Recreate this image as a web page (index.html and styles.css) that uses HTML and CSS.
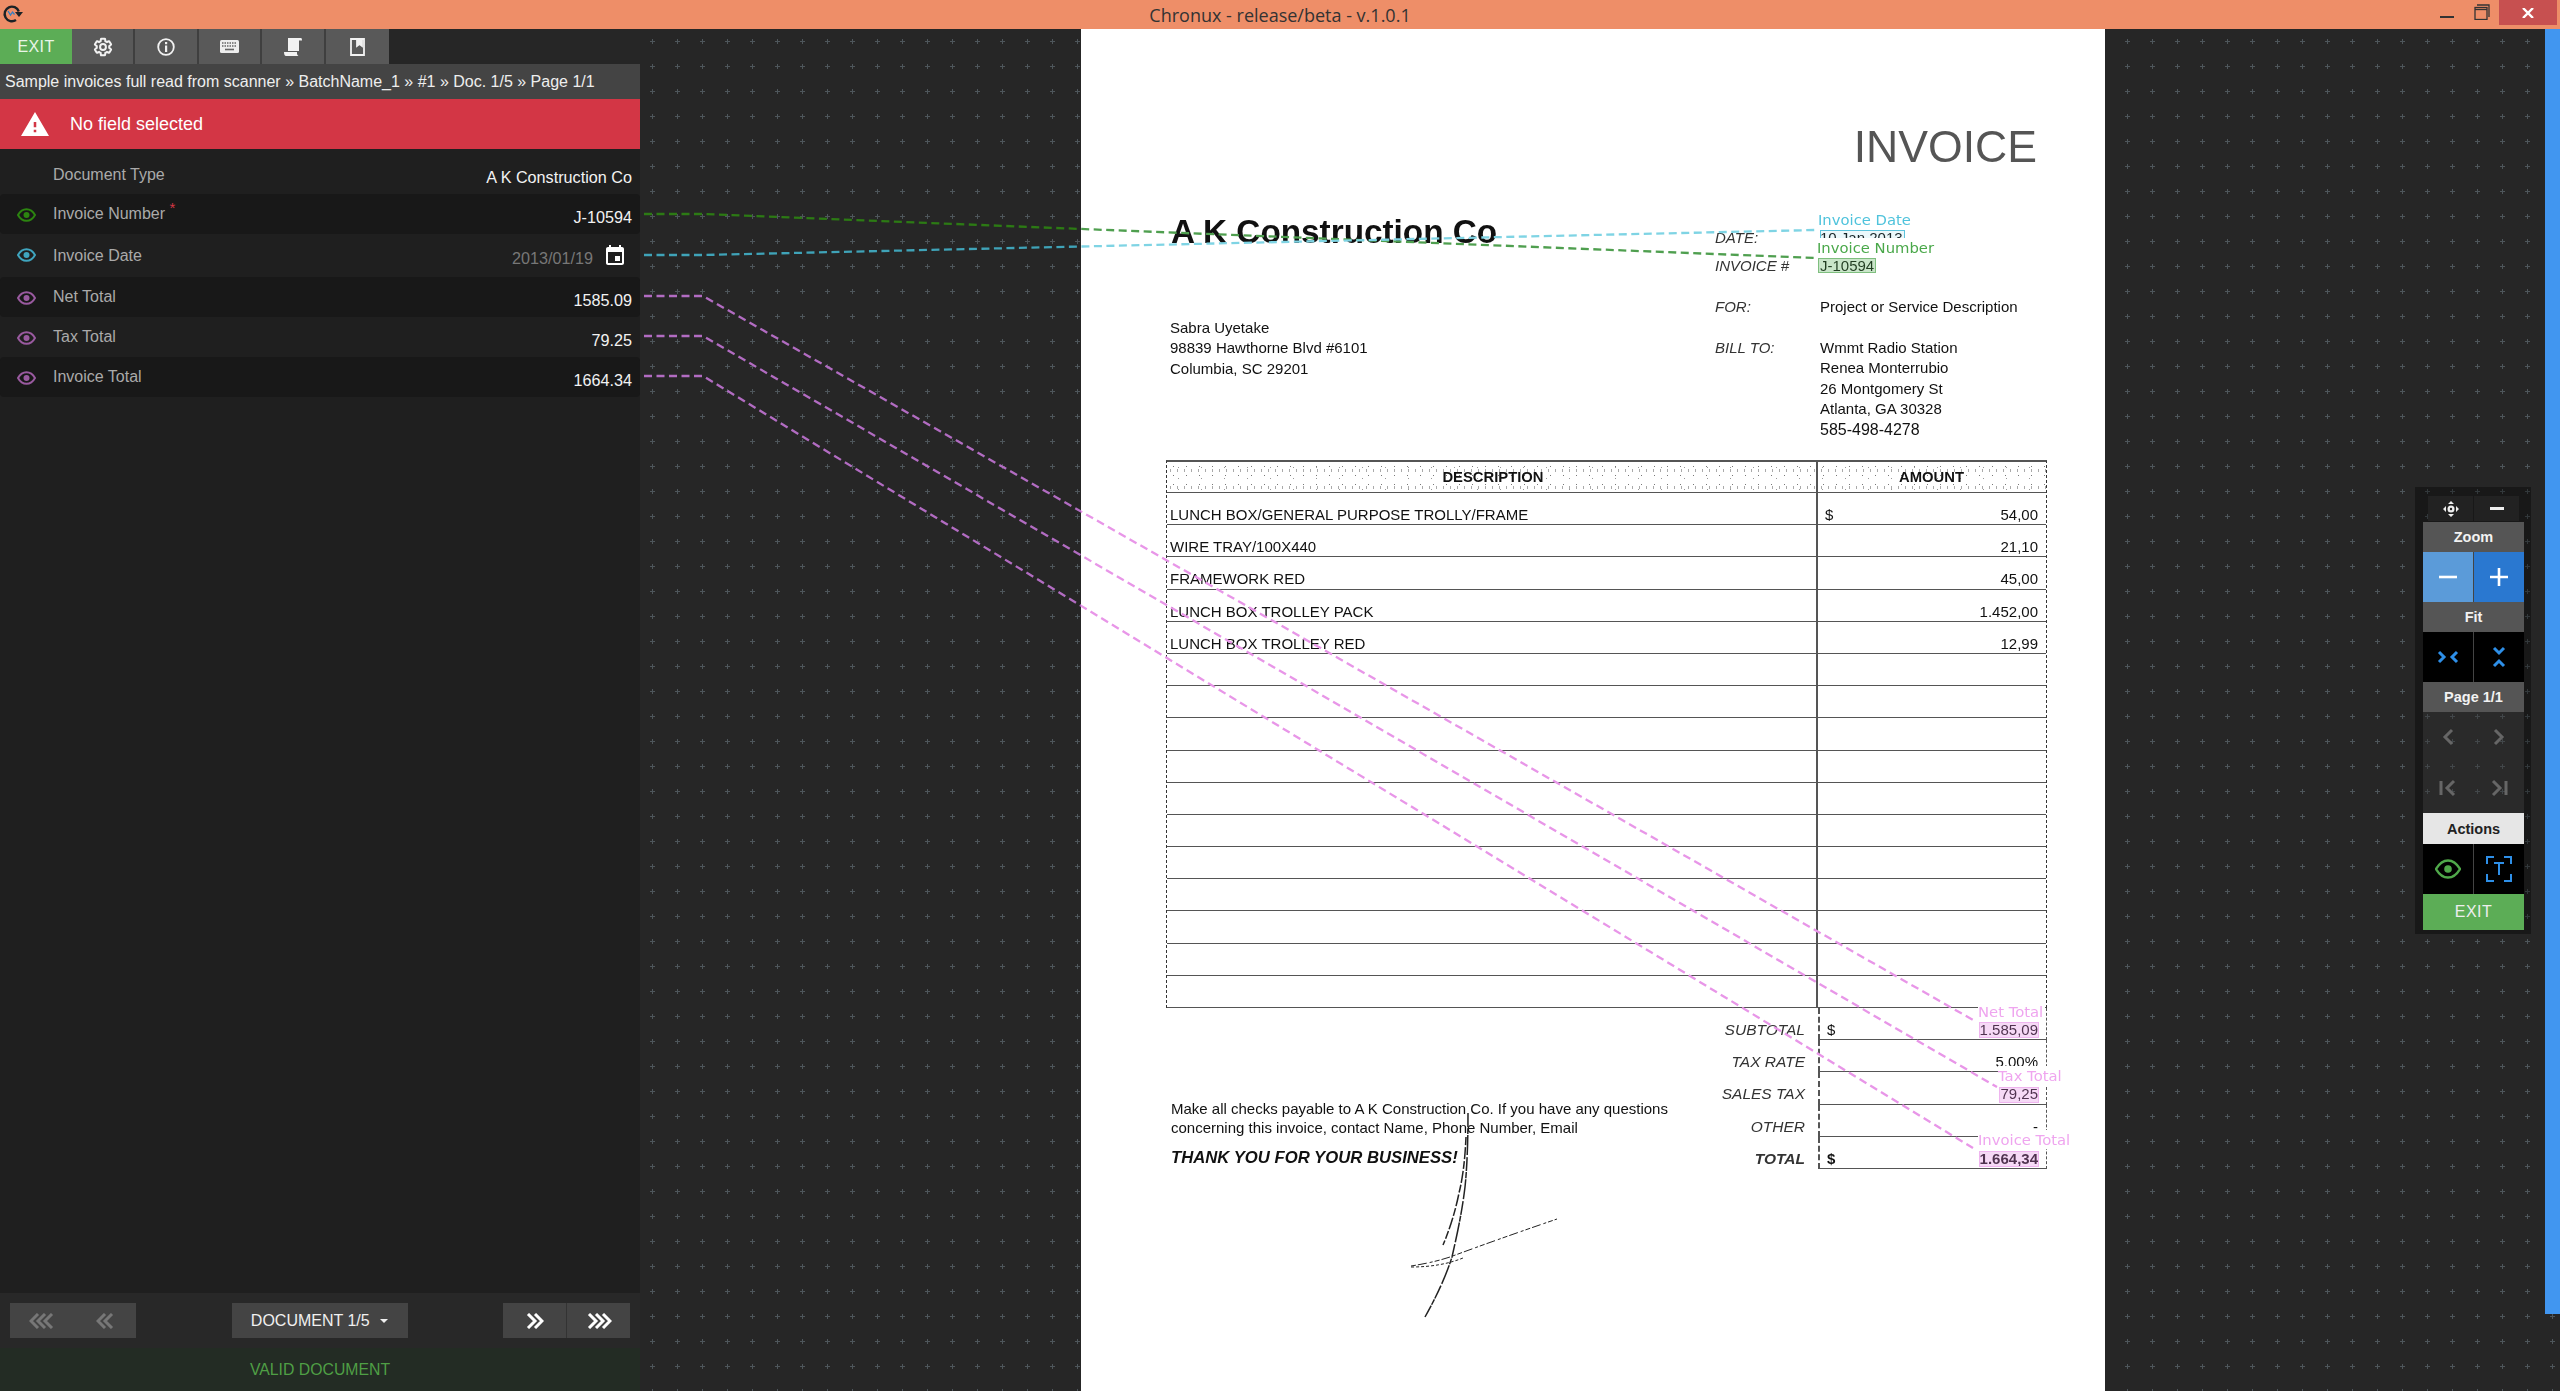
FILE: index.html
```html
<!DOCTYPE html>
<html lang="en">

<head>
    <meta charset="UTF-8">
    <title>Chronux - release/beta - v.1.0.1</title>
    <link rel="stylesheet" href="styles.css">
</head>

<body>
    <header class="titlebar">
        <svg class="app-logo" width="22" height="22" viewBox="0 0 22 22">
            <path d="M14 17A7.300 7.300 0 1 1 16.800 8.500" fill="none" stroke="#1c2226" stroke-width="2.400"/>
            <path d="M13 9h8l-4 5z" fill="#1c2226"/>
            <path d="M6 8l2.500 4 2-3 2 2.500" fill="none" stroke="#2f7fc4" stroke-width="1.300"/>
        </svg>
        <span class="app-title">Chronux - release/beta - v.1.0.1</span>
        <div class="win-controls">
            <span class="win-min"></span>
            <svg class="win-restore" width="16" height="16" viewBox="0 0 16 16" fill="none" stroke="#333" stroke-width="1.300">
                <path d="M3 1h12v12"/>
                <rect x="1" y="3.500" width="12" height="12"/>
                <path d="M1 5.500h12"/>
            </svg>
            <span class="win-close">
                <svg width="12" height="10" viewBox="0 0 12 10"><path d="M1 0l10 10M11 0L1 10" stroke="#fff" stroke-width="2.400"/></svg>
            </span>
        </div>
    </header>

    <main class="workspace">
        <aside class="sidebar">
            <nav class="toolbar">
                <button class="tool-exit">EXIT</button>
                <button class="tool-btn">
                    <svg width="20" height="20" viewBox="0 0 24 24" fill="none" stroke="#f2f2f2" stroke-width="2.400"><path d="M19.430 12.980c.04-.32.07-.64.07-.98s-.03-.66-.07-.98l2.110-1.650c.19-.15.24-.42.12-.64l-2-3.460c-.12-.22-.39-.3-.61-.22l-2.490 1c-.52-.4-1.080-.73-1.690-.98l-.38-2.650C14.460 2.180 14.250 2 14 2h-4c-.25 0-.46.18-.49.42l-.38 2.650c-.61.25-1.170.59-1.690.98l-2.490-1c-.23-.09-.49 0-.61.22l-2 3.460c-.13.22-.07.49.12.64l2.110 1.650c-.04.32-.07.65-.07.98s.03.66.07.98l-2.110 1.650c-.19.15-.24.42-.12.64l2 3.460c.12.22.39.3.61.22l2.490-1c.52.4 1.080.73 1.690.98l.38 2.650c.03.24.24.42.49.42h4c.25 0 .46-.18.49-.42l.38-2.650c.61-.25 1.170-.59 1.690-.98l2.490 1c.23.09.49 0 .61-.22l2-3.460c.12-.22.07-.49-.12-.64l-2.110-1.650z"/><circle cx="12" cy="12" r="3.500"/></svg>
                </button>
                <button class="tool-btn">
                    <svg width="18" height="18" viewBox="0 0 18 18"><circle cx="9" cy="9" r="7.800" fill="none" stroke="#f2f2f2" stroke-width="1.800"/><rect x="8" y="7.500" width="2.200" height="6.500" fill="#f2f2f2"/><rect x="8" y="4" width="2.200" height="2.200" fill="#f2f2f2"/></svg>
                </button>
                <button class="tool-btn">
                    <svg width="19" height="13" viewBox="0 0 19 13"><rect width="19" height="13" rx="1.500" fill="#eee"/><path d="M2 3h15M2 6h15" stroke="#666" stroke-width="1.500" stroke-dasharray="1.500 1"/><path d="M5 9.500h9" stroke="#666" stroke-width="1.600"/></svg>
                </button>
                <button class="tool-btn">
                    <svg width="18" height="18" viewBox="0 0 18 18" fill="#f2f2f2"><path d="M4 0h13c.6 0 1 .8 1 2.500h-3V13H4z"/><path d="M0 14h13v1.500c0 1 .6 1.800 1.500 2.500H2c-1.200 0-2-1.500-2-4z"/></svg>
                </button>
                <button class="tool-btn">
                    <svg width="15" height="18" viewBox="0 0 15 18"><path d="M1 1h13v16H1zM7 1v7l2.500-2L12 8V1" fill="none" stroke="#f2f2f2" stroke-width="1.800"/><path d="M7 1h5v7L9.500 6 7 8z" fill="#f2f2f2"/></svg>
                </button>
            </nav>

            <div class="breadcrumb">Sample invoices full read from scanner » BatchName_1 » #1 » Doc. 1/5 » Page 1/1</div>

            <div class="alert">
                <svg width="28" height="24" viewBox="1 2 22 19" preserveAspectRatio="none"><path fill="#fff" d="M1 21h22L12 2 1 21zm12-3h-2v-2h2v2zm0-4h-2v-4h2v4z"/></svg>
                <span>No field selected</span>
            </div>

            <ul class="fields">
                <li class="field">
                    <span class="field-name">Document Type</span>
                    <span class="field-value">A K Construction Co</span>
                </li>
                <li class="field field-dark">
                    <svg class="eye eye-green" width="19" height="14" viewBox="0 0 19 14"><path d="M1 7c2-3.600 5-5.800 8.500-5.800S16 3.400 18 7c-2 3.600-5 5.800-8.500 5.800S3 10.600 1 7z"/><circle cx="9.500" cy="7" r="3"/></svg>
                    <span class="field-name">Invoice Number <sup class="required">*</sup></span>
                    <span class="field-value">J-10594</span>
                </li>
                <li class="field field-date">
                    <svg class="eye eye-blue" width="19" height="14" viewBox="0 0 19 14"><path d="M1 7c2-3.600 5-5.800 8.500-5.800S16 3.400 18 7c-2 3.600-5 5.800-8.500 5.800S3 10.600 1 7z"/><circle cx="9.500" cy="7" r="3"/></svg>
                    <span class="field-name">Invoice Date</span>
                    <span class="field-value date-value">2013/01/19</span>
                    <svg class="calendar" width="24" height="24" viewBox="0 0 24 24"><path fill="#fff" d="M17 12h-5v5h5v-5zM16 1v2H8V1H6v2H5c-1.110 0-1.990.9-1.990 2L3 19c0 1.100.89 2 2 2h14c1.100 0 2-.9 2-2V5c0-1.100-.9-2-2-2h-1V1h-2zm3 18H5V8h14v11z"/></svg>
                </li>
                <li class="field field-dark">
                    <svg class="eye eye-purple" width="19" height="14" viewBox="0 0 19 14"><path d="M1 7c2-3.600 5-5.800 8.500-5.800S16 3.400 18 7c-2 3.600-5 5.800-8.500 5.800S3 10.600 1 7z"/><circle cx="9.500" cy="7" r="3"/></svg>
                    <span class="field-name">Net Total</span>
                    <span class="field-value">1585.09</span>
                </li>
                <li class="field">
                    <svg class="eye eye-purple" width="19" height="14" viewBox="0 0 19 14"><path d="M1 7c2-3.600 5-5.800 8.500-5.800S16 3.400 18 7c-2 3.600-5 5.800-8.500 5.800S3 10.600 1 7z"/><circle cx="9.500" cy="7" r="3"/></svg>
                    <span class="field-name">Tax Total</span>
                    <span class="field-value">79.25</span>
                </li>
                <li class="field field-dark">
                    <svg class="eye eye-purple" width="19" height="14" viewBox="0 0 19 14"><path d="M1 7c2-3.600 5-5.800 8.500-5.800S16 3.400 18 7c-2 3.600-5 5.800-8.500 5.800S3 10.600 1 7z"/><circle cx="9.500" cy="7" r="3"/></svg>
                    <span class="field-name">Invoice Total</span>
                    <span class="field-value">1664.34</span>
                </li>
            </ul>

            <div class="doc-nav">
                <div class="nav-group nav-disabled">
                    <button class="nav-btn"><svg width="26" height="16" viewBox="0 0 26 16"><path d="M9 1L2 8l7 7M16 1L9 8l7 7M23 1l-7 7 7 7"/></svg></button>
                    <button class="nav-btn"><svg width="18" height="16" viewBox="0 0 18 16"><path d="M9 1L2 8l7 7M16 1L9 8l7 7"/></svg></button>
                </div>
                <button class="nav-doc">DOCUMENT 1/5 <span class="caret"></span></button>
                <div class="nav-group">
                    <button class="nav-btn"><svg width="18" height="16" viewBox="0 0 18 16"><path d="M2 1l7 7-7 7M9 1l7 7-7 7"/></svg></button>
                    <button class="nav-btn"><svg width="26" height="16" viewBox="0 0 26 16"><path d="M3 1l7 7-7 7M10 1l7 7-7 7M17 1l7 7-7 7"/></svg></button>
                </div>
            </div>
            <div class="doc-status">VALID DOCUMENT</div>
        </aside>

        <section class="viewer">
            <svg class="dots" width="100%" height="100%">
                <defs>
                    <pattern id="dot-grid" width="25" height="25" patternUnits="userSpaceOnUse">
                        <path d="M10 12.500h5M12.500 10v5" stroke="#4e565b" stroke-width="1"/>
                    </pattern>
                </defs>
                <rect width="100%" height="100%" fill="url(#dot-grid)"/>
            </svg>

            <article class="doc">
                <h1 class="inv-title">INVOICE</h1>
                <div class="inv-head">
                    <div class="inv-from">
                        <h2 class="inv-company">A K Construction Co</h2>
                        <p class="inv-address">Sabra Uyetake<br>98839 Hawthorne Blvd #6101<br>Columbia, SC 29201</p>
                    </div>
                    <div class="inv-meta">
                        <div class="meta-row"><span class="meta-label">DATE:</span><span class="meta-cut">10 Jan 2013</span></div>
                        <div class="meta-row"><span class="meta-label">INVOICE #</span><span>J-10594</span></div>
                        <div class="meta-row meta-for"><span class="meta-label">FOR:</span><span>Project or Service Description</span></div>
                        <div class="meta-bill">
                            <span class="meta-label">BILL TO:</span>
                            <span>Wmmt Radio Station<br>Renea Monterrubio<br>26 Montgomery St<br>Atlanta, GA 30328<br><span class="meta-phone">585-498-4278</span></span>
                        </div>
                    </div>
                </div>

                <div class="inv-table">
                    <div class="inv-row inv-row-head"><div class="cell-desc">DESCRIPTION</div><div class="cell-amount">AMOUNT</div></div>
                    <div class="inv-row"><div class="cell-desc">LUNCH BOX/GENERAL PURPOSE TROLLY/FRAME</div><div class="cell-amount"><span>$</span><span>54,00</span></div></div>
                    <div class="inv-row"><div class="cell-desc">WIRE TRAY/100X440</div><div class="cell-amount"><span></span><span>21,10</span></div></div>
                    <div class="inv-row"><div class="cell-desc">FRAMEWORK RED</div><div class="cell-amount"><span></span><span>45,00</span></div></div>
                    <div class="inv-row"><div class="cell-desc">LUNCH BOX TROLLEY PACK</div><div class="cell-amount"><span></span><span>1.452,00</span></div></div>
                    <div class="inv-row"><div class="cell-desc">LUNCH BOX TROLLEY RED</div><div class="cell-amount"><span></span><span>12,99</span></div></div>
                    <div class="inv-row"><div class="cell-desc"></div><div class="cell-amount"></div></div>
                    <div class="inv-row"><div class="cell-desc"></div><div class="cell-amount"></div></div>
                    <div class="inv-row"><div class="cell-desc"></div><div class="cell-amount"></div></div>
                    <div class="inv-row"><div class="cell-desc"></div><div class="cell-amount"></div></div>
                    <div class="inv-row"><div class="cell-desc"></div><div class="cell-amount"></div></div>
                    <div class="inv-row"><div class="cell-desc"></div><div class="cell-amount"></div></div>
                    <div class="inv-row"><div class="cell-desc"></div><div class="cell-amount"></div></div>
                    <div class="inv-row"><div class="cell-desc"></div><div class="cell-amount"></div></div>
                    <div class="inv-row"><div class="cell-desc"></div><div class="cell-amount"></div></div>
                    <div class="inv-row"><div class="cell-desc"></div><div class="cell-amount"></div></div>
                    <div class="inv-row"><div class="cell-desc"></div><div class="cell-amount"></div></div>
                </div>

                <div class="inv-bottom">
                    <div class="inv-notes">
                        <p>Make all checks payable to A K Construction Co. If you have any questions<br>concerning this invoice, contact Name, Phone Number, Email</p>
                        <p class="inv-thanks">THANK YOU FOR YOUR BUSINESS!</p>
                    </div>
                    <div class="inv-summary">
                        <div class="sum-row"><div class="sum-label">SUBTOTAL</div><div class="cell-amount"><span>$</span><span>1.585,09</span></div></div>
                        <div class="sum-row"><div class="sum-label">TAX RATE</div><div class="cell-amount"><span></span><span>5.00%</span></div></div>
                        <div class="sum-row"><div class="sum-label">SALES TAX</div><div class="cell-amount"><span></span><span>79,25</span></div></div>
                        <div class="sum-row"><div class="sum-label">OTHER</div><div class="cell-amount"><span></span><span>-</span></div></div>
                        <div class="sum-row sum-total"><div class="sum-label">TOTAL</div><div class="cell-amount"><span>$</span><span>1.664,34</span></div></div>
                    </div>
                </div>

                <!-- signature drawn over the page -->
                <svg class="signature" width="170" height="220" viewBox="0 0 170 220" fill="none" stroke="#222" stroke-width="1.500">
                    <path d="M57 1c0 30-1 55-3 74-3 25-8 48-13 70-7 22-17 42-27 60" stroke-dasharray="14 1 6 1 20 2"/>
                    <path d="M55 25c-1 22-3 40-7 56-4 20-10 38-16 52" stroke-dasharray="8 2 12 2"/>
                    <path d="M0 154c13-2 27-5 39-9 35-13 72-26 107-38" stroke-width="1" stroke-dasharray="5 2 9 3 3 2"/>
                    <path d="M0 155c20 0 37-3 52-9" stroke-width="1" stroke-dasharray="3 2"/>
                </svg>

                <!-- field boxes found by the reader -->
                <span class="ann-box box-date"></span>
                <span class="ann-box box-number"></span>
                <span class="ann-box box-net"></span>
                <span class="ann-box box-tax"></span>
                <span class="ann-box box-total"></span>
                <span class="ann-label label-date">Invoice Date</span>
                <span class="ann-label label-number">Invoice Number</span>
                <span class="ann-label label-net">Net Total</span>
                <span class="ann-label label-tax">Tax Total</span>
                <span class="ann-label label-total">Invoice Total</span>
            </article>

            <div class="tools">
                <div class="tools-grip">
                    <button>
                        <svg width="16" height="16" viewBox="0 0 16 16" fill="#eee"><path d="M8 0l3 3H5zM8 16l3-3H5zM0 8l3-3v6zM16 8l-3-3v6z"/><circle cx="8" cy="8" r="3.500"/><circle cx="8" cy="8" r="1.200" fill="#222"/></svg>
                    </button>
                    <button><span class="grip-minus"></span></button>
                </div>
                <div class="tools-head">Zoom</div>
                <div class="tools-row">
                    <button class="btn-zoom-out"><svg width="20" height="20" viewBox="0 0 20 20"><path d="M1 10h18" stroke="#fff" stroke-width="2.600"/></svg></button>
                    <button class="btn-zoom-in"><svg width="20" height="20" viewBox="0 0 20 20"><path d="M1 10h18M10 1v18" stroke="#fff" stroke-width="2.600"/></svg></button>
                </div>
                <div class="tools-head">Fit</div>
                <div class="tools-row tools-black">
                    <button><svg class="line-icon line-blue" width="22" height="14" viewBox="0 0 22 14"><path d="M2 2l5 5-5 5M20 2l-5 5 5 5"/></svg></button>
                    <button><svg class="line-icon line-blue" width="14" height="22" viewBox="0 0 14 22"><path d="M2 2l5 5 5-5M2 20l5-5 5 5"/></svg></button>
                </div>
                <div class="tools-head">Page 1/1</div>
                <div class="tools-row tools-off">
                    <button><svg class="line-icon line-grey" width="12" height="18" viewBox="0 0 12 18"><path d="M10 2L3 9l7 7"/></svg></button>
                    <button><svg class="line-icon line-grey" width="12" height="18" viewBox="0 0 12 18"><path d="M2 2l7 7-7 7"/></svg></button>
                </div>
                <div class="tools-row tools-off tools-off-last">
                    <button><svg class="line-icon line-grey" width="18" height="18" viewBox="0 0 18 18"><path d="M2 2v14M15 2L8 9l7 7"/></svg></button>
                    <button><svg class="line-icon line-grey" width="18" height="18" viewBox="0 0 18 18"><path d="M16 2v14M3 2l7 7-7 7"/></svg></button>
                </div>
                <div class="tools-head tools-head-light">Actions</div>
                <div class="tools-row tools-black">
                    <button><svg width="26" height="20" viewBox="0 0 26 20" fill="none" stroke="#4fa84a" stroke-width="2.400"><path d="M1 10c3-5 7-8.500 12-8.500S22 5 25 10c-3 5-7 8.500-12 8.500S4 15 1 10z"/><circle cx="13" cy="10" r="3.800" fill="#4fa84a" stroke="none"/></svg></button>
                    <button><svg width="26" height="26" viewBox="0 0 26 26" fill="none" stroke="#2e8fe8" stroke-width="2"><path d="M1 8V1h7M18 1h7v7M25 18v7h-7M8 25H1v-7M8 7h10M13 7v12"/></svg></button>
                </div>
                <button class="tools-exit">EXIT</button>
            </div>

            <div class="scroll-thumb"></div>
        </section>

        <!-- connectors from the form fields to the page -->
        <svg class="links" width="2560" height="1362" viewBox="0 29 2560 1362" fill="none" stroke-width="2.300" stroke-dasharray="8 4.500">
            <defs>
                <clipPath id="on-dark"><rect x="0" y="0" width="1081" height="1391"/></clipPath>
                <clipPath id="on-page"><rect x="1081" y="0" width="1024" height="1391"/></clipPath>
            </defs>
            <g clip-path="url(#on-dark)">
                <path stroke="#2c7a14" d="M644 214H703L1815 258"/>
                <path stroke="#3fa3b8" d="M644 255H703L1815 230"/>
                <path stroke="#b26cc2" d="M644 296H703L1973 1020"/>
                <path stroke="#b26cc2" d="M644 336H703L1997 1087"/>
                <path stroke="#b26cc2" d="M644 376H703L1973 1148"/>
            </g>
            <g clip-path="url(#on-page)">
                <path stroke="#4f9f4f" d="M644 214H703L1815 258"/>
                <path stroke="#7fd4e4" d="M644 255H703L1815 230"/>
                <path stroke="#e896e8" d="M644 296H703L1973 1020"/>
                <path stroke="#e896e8" d="M644 336H703L1997 1087"/>
                <path stroke="#e896e8" d="M644 376H703L1973 1148"/>
            </g>
        </svg>
    </main>
</body>

</html>
```

FILE: styles.css
```css
* {
    box-sizing: border-box;
}

html,
body {
    margin: 0;
    height: 100%;
    overflow: hidden;
}

body {
    display: flex;
    flex-direction: column;
    font-family: "Liberation Sans", Arial, sans-serif;
    background-color: #262626;
}

button {
    font-family: inherit;
    border: none;
    padding: 0;
    color: inherit;
    background: none;
}

/* Title bar */
.titlebar {
    flex: 0 0 29px;
    position: relative;
    display: flex;
    align-items: center;
    justify-content: center;
    background-color: #ee8e68;
}

.app-logo {
    position: absolute;
    left: 2px;
    top: 3px;
}

.app-title {
    font-family: "Open Sans", sans-serif;
    font-size: 18px;
    color: #333;
}

.win-controls {
    position: absolute;
    right: 3px;
    top: 0;
    display: flex;
    align-items: flex-start;
}

.win-min {
    width: 14px;
    height: 2px;
    margin: 16px 20px 0 0;
    background-color: #333;
}

.win-restore {
    margin: 4px 9px 0 0;
}

.win-close {
    width: 58px;
    height: 25px;
    display: flex;
    align-items: center;
    justify-content: center;
    background-color: #c75050;
}

/* Left panel */
.workspace {
    flex: 1;
    position: relative;
    display: flex;
    min-height: 0;
}

.sidebar {
    flex: 0 0 640px;
    display: flex;
    flex-direction: column;
}

.toolbar {
    flex: 0 0 35px;
    display: flex;
}

.tool-exit {
    width: 72px;
    font-size: 16px;
    letter-spacing: 0.4px;
    color: #e9f5e8;
    background-color: #5cad56;
}

.tool-btn {
    width: 63.400px;
    display: flex;
    align-items: center;
    justify-content: center;
    background-color: #595959;
    border-right: 2px solid #3f3f3f;
}

.tool-btn:last-child {
    border-right: none;
}

.breadcrumb {
    flex: 0 0 35px;
    padding-left: 5px;
    line-height: 35px;
    font-size: 16px;
    color: #eee;
    white-space: nowrap;
    background-color: #444;
}

.alert {
    flex: 0 0 50px;
    display: flex;
    align-items: center;
    gap: 21px;
    padding-left: 21px;
    font-size: 18px;
    color: #fff;
    background-color: #d33645;
}

.fields {
    flex: 1;
    list-style: none;
    margin: 0;
    padding: 6px 0 0;
    background-color: #1f1f1f;
}

.field {
    position: relative;
    height: 40px;
    display: flex;
    align-items: center;
    padding: 0 8px 0 53px;
    font-size: 16.200px;
}

.field:first-child {
    height: 39px;
}

.field-dark {
    background-color: #181818;
    border-radius: 4px;
}

.field-date {
    height: 43px;
}

.eye {
    position: absolute;
    left: 17px;
    top: 14px;
    fill: none;
    stroke-width: 2;
}

.eye circle {
    stroke: none;
}

.eye-green {
    stroke: #2c8510;
}

.eye-green circle {
    fill: #2c8510;
}

.eye-blue {
    stroke: #3fa5bf;
}

.eye-blue circle {
    fill: #3fa5bf;
}

.eye-purple {
    stroke: #9a5aa0;
}

.eye-purple circle {
    fill: #9a5aa0;
}

.field-name {
    flex: 1;
    font-size: 16px;
    color: #aaa;
}

.required {
    font-size: 15px;
    line-height: 0;
    color: #d33645;
}

.field-value {
    margin-top: 6px;
    color: #f2f2f2;
}

.date-value {
    margin-right: 10px;
    color: #777;
}

.calendar {
    margin: 1px 5px 0 0;
}

/* Document pager at the bottom */
.doc-nav {
    flex: 0 0 55px;
    display: flex;
    align-items: center;
    justify-content: space-between;
    padding: 0 10px;
    background-color: #282828;
}

.nav-group {
    display: flex;
    gap: 1px;
    background-color: #333;
}

.nav-btn {
    width: 63px;
    height: 35px;
    display: flex;
    align-items: center;
    justify-content: center;
    background-color: #444;
}

.nav-btn svg {
    fill: none;
    stroke: #fff;
    stroke-width: 3;
}

.nav-disabled .nav-btn svg {
    stroke: #777;
}

.nav-disabled {
    gap: 0;
}

.nav-doc {
    width: 176px;
    height: 35px;
    font-size: 16px;
    color: #f0f0f0;
    background-color: #444;
}

.caret {
    display: inline-block;
    margin-left: 6px;
    vertical-align: middle;
    border-left: 4px solid transparent;
    border-right: 4px solid transparent;
    border-top: 4px solid #f0f0f0;
}

.doc-status {
    flex: 0 0 43px;
    line-height: 43px;
    text-align: center;
    font-size: 15.800px;
    color: #4f9f45;
    background-color: #232c24;
}

/* Viewer */
.viewer {
    flex: 1;
    position: relative;
    min-width: 0;
}

.dots {
    position: absolute;
    left: 0;
    top: 0;
}

.doc {
    position: relative;
    width: 1024px;
    height: 1362px;
    margin-left: 441px;
    padding-left: 85px;
    color: #111;
    background-color: #fff;
    filter: blur(0.35px);
    overflow: hidden;
}

.inv-title {
    height: 183px;
    margin: 0;
    padding: 96px 68px 0 0;
    font-size: 44.600px;
    line-height: 43px;
    font-weight: normal;
    text-align: right;
    color: #555;
}

.inv-head {
    height: 247.500px;
    display: grid;
    grid-template-columns: 549px 1fr;
    font-size: 15px;
    line-height: 20.400px;
}

.inv-from {
    padding-left: 4px;
}

.inv-company {
    margin: 0;
    padding-left: 1px;
    font-size: 33.300px;
    line-height: 40px;
    color: #111;
}

.inv-address {
    margin: 66px 0 0;
}

.inv-meta {
    padding-top: 12px;
}

.meta-row {
    height: 28px;
    display: flex;
    align-items: center;
}

.meta-for {
    margin-top: 13px;
}

.meta-label {
    flex: 0 0 105px;
    font-style: italic;
    color: #333;
}

.meta-cut {
    height: 10px;
    margin-bottom: 10px;
    overflow: hidden;
}

.meta-bill {
    display: flex;
    margin-top: 17px;
}

.meta-phone {
    font-size: 16px;
}

.inv-table {
    width: 881px;
    font-size: 15px;
    border-top: 2px solid #555;
    border-left: 1px dashed #333;
    border-right: 1px dashed #333;
}

.inv-row {
    display: flex;
    height: 32.200px;
    border-bottom: 1.500px solid #555;
}

.inv-row-head {
    height: 31.500px;
    align-items: stretch;
    font-weight: bold;
    font-size: 14.800px;
    background-image: radial-gradient(#777 0.5px, transparent 0.8px), radial-gradient(#999 0.5px, transparent 0.8px), radial-gradient(#aaa 0.5px, transparent 0.8px);
    background-size: 13px 9px, 23px 11px, 7px 17px;
}

.inv-row-head div {
    padding-top: 5px;
    text-align: center;
    display: block;
}

.cell-desc {
    flex: 0 0 651px;
    padding: 12px 0 0 3px;
    line-height: 20px;
    border-right: 2px solid #555;
}

.cell-amount {
    flex: 1;
    display: flex;
    justify-content: space-between;
    padding: 12px 8px 0 7px;
    line-height: 20px;
}

.inv-bottom {
    width: 881px;
    display: flex;
    justify-content: space-between;
}

.inv-notes {
    width: 534px;
    padding: 91px 0 0 5px;
    font-size: 15px;
    line-height: 19px;
}

.inv-notes p {
    margin: 0;
}

.inv-notes .inv-thanks {
    margin-top: 10px;
    font-size: 16.700px;
    line-height: 22px;
    font-weight: bold;
    font-style: italic;
    color: #111;
}

.inv-summary {
    width: 347px;
    font-size: 15px;
}

.sum-row {
    display: flex;
    height: 32.200px;
}

.sum-row .cell-amount {
    border-left: 2px dashed #555;
    border-right: 1px dashed #555;
    border-bottom: 1.500px solid #555;
}

.sum-label {
    flex: 0 0 118px;
    padding: 12px 13px 0 0;
    line-height: 20px;
    font-size: 15.500px;
    text-align: right;
    font-style: italic;
    color: #333;
}

.sum-total {
    font-weight: bold;
    color: #111;
}

.signature {
    position: absolute;
    left: 330px;
    top: 1083px;
}

/* Overlays on the page, placed in page coordinates */
.ann-box {
    position: absolute;
    border: 1px solid;
}

.ann-label {
    position: absolute;
    height: 19px;
    padding-right: 2px;
    font-family: "DejaVu Sans", sans-serif;
    font-size: 14.800px;
    line-height: 19px;
    white-space: nowrap;
    background-color: #fff;
}

.box-date {
    left: 739px;
    top: 201px;
    width: 85px;
    height: 8px;
    border-color: #5cc3dc;
    border-bottom: none;
    background-color: rgba(92, 195, 220, 0.12);
}

.box-number {
    left: 737px;
    top: 229px;
    width: 58px;
    height: 15px;
    border-color: #7fbf7f;
    background-color: rgba(76, 170, 76, 0.3);
}

.box-net,
.box-tax,
.box-total {
    border-color: #efb5ef;
    background-color: rgba(224, 130, 224, 0.3);
}

.box-net {
    left: 898px;
    top: 993px;
    width: 60px;
    height: 16px;
}

.box-tax {
    left: 918px;
    top: 1058px;
    width: 40px;
    height: 16px;
}

.box-total {
    left: 898px;
    top: 1122px;
    width: 60px;
    height: 16px;
}

.label-date {
    left: 737px;
    top: 181px;
    color: #4fc3dc;
}

.label-number {
    left: 736px;
    top: 209px;
    color: #4aa84a;
}

.label-net,
.label-tax,
.label-total {
    color: #efa5ef;
}

.label-net {
    left: 897px;
    top: 973px;
}

.label-tax {
    left: 917px;
    top: 1037px;
}

.label-total {
    left: 897px;
    top: 1101px;
}

/* Floating tool panel */
.tools {
    position: absolute;
    top: 458px;
    right: 29px;
    width: 116px;
    height: 447px;
    padding: 9px 7px 0 8px;
    background-color: rgba(0, 0, 0, 0.35);
    z-index: 2;
}

.tools-grip {
    display: flex;
    gap: 1px;
    height: 25px;
    margin: 0 5px 1px;
}

.tools-grip button {
    flex: 1;
    display: flex;
    align-items: center;
    justify-content: center;
    background-color: #222;
}

.grip-minus {
    width: 14px;
    height: 3px;
    background-color: #eee;
}

.tools-head {
    height: 30px;
    line-height: 31px;
    text-align: center;
    font-size: 14.500px;
    font-weight: bold;
    color: #f2f2f2;
    background-color: #555;
}

.tools-head-light {
    height: 31px;
    line-height: 32px;
    color: #222;
    background-color: #e6e6e6;
}

.tools-row {
    display: grid;
    grid-template-columns: 50px 51px;
    height: 50px;
}

.tools-off-last {
    height: 51px;
}

.tools-row button {
    display: flex;
    align-items: center;
    justify-content: center;
}

.tools-row button + button {
    border-left: 1px solid #444;
}

.btn-zoom-out {
    background-color: #5b9bd9;
}

.btn-zoom-in {
    background-color: #2a78d0;
}

.tools-black button {
    background-color: #000;
}

.tools-off button {
    background-color: rgba(255, 255, 255, 0.08);
}

.tools-off button + button {
    border-left: none;
}

.line-icon {
    fill: none;
    stroke-width: 3;
}

.line-blue {
    stroke: #2e8fe8;
}

.line-grey {
    stroke: #666;
}

.tools-exit {
    width: 101px;
    height: 36px;
    font-size: 16px;
    letter-spacing: 0.5px;
    color: #eee;
    background-color: #5cad56;
}

.scroll-thumb {
    position: absolute;
    top: 0;
    right: 0;
    width: 15px;
    height: 1285px;
    background-color: #4196f0;
}

.links {
    position: absolute;
    left: 0;
    top: 0;
    pointer-events: none;
    z-index: 1;
}
```
